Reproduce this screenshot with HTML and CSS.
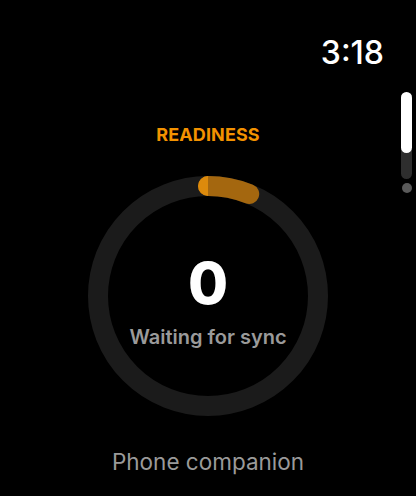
FILE: index.html
```html
<!DOCTYPE html>
<html>
<head>
<meta charset="utf-8">
<link rel="stylesheet" href="styles.css">
</head>
<body>
<div class="screen">
  <div class="status"><span class="time">3:18</span></div>
  <div class="scroll">
    <div class="track"><div class="thumb"></div></div>
    <div class="dot"></div>
  </div>
  <div class="title">READINESS</div>
  <div class="gauge">
    <svg class="ring" width="240" height="240" viewBox="0 0 240 240">
      <circle cx="120" cy="120" r="110" fill="none" stroke="#1b1b1b" stroke-width="20"/>
      <path d="M120 10 A110 110 0 0 1 161.2 18" fill="none" stroke="#a4670f" stroke-width="20" stroke-linecap="round"/>
      <path d="M120 0 A10 10 0 0 0 120 20 Z" fill="#dc8a0c"/>
    </svg>
    <div class="center">
      <div class="value">0</div>
      <div class="label">Waiting for sync</div>
    </div>
  </div>
  <div class="footer">Phone companion</div>
</div>
</body>
</html>
```
FILE: styles.css
```css
html, body {
  margin: 0;
  padding: 0;
  background: #000;
}
.screen {
  width: 416px;
  height: 496px;
  background: #000;
  position: relative;
  display: flex;
  flex-direction: column;
  align-items: center;
  font-family: Inter, "Noto Sans", sans-serif;
  overflow: hidden;
}
.status {
  align-self: stretch;
  display: flex;
  justify-content: flex-end;
  padding: 35px 32px 0 0;
  height: 40px;
}
.time {
  color: #fff;
  font-size: 32px;
  line-height: 36px;
  font-weight: 500;
}
.scroll {
  position: absolute;
  left: 401px;
  top: 92px;
  display: flex;
  flex-direction: column;
  align-items: center;
  gap: 4px;
}
.track {
  width: 11px;
  height: 87px;
  border-radius: 6px;
  background: #2e2e2e;
}
.thumb {
  width: 11px;
  height: 61px;
  border-radius: 6px;
  background: #fff;
}
.dot {
  width: 10px;
  height: 10px;
  border-radius: 50%;
  background: #5a5a5a;
}
.title {
  margin-top: 50px;
  color: #f39200;
  font-size: 18px;
  font-weight: 700;
  line-height: 20px;
  letter-spacing: 0.1px;
}
.gauge {
  margin-top: 31px;
  display: grid;
  width: 240px;
  height: 240px;
}
.ring, .center {
  grid-area: 1 / 1;
}
.center {
  display: flex;
  flex-direction: column;
  align-items: center;
  justify-content: center;
  padding-top: 8px;
  box-sizing: border-box;
}
.value {
  color: #fff;
  font-size: 58px;
  font-weight: 800;
  line-height: 60px;
}
.label {
  margin-top: 13px;
  color: #9a9a9a;
  font-size: 20px;
  font-weight: 600;
  line-height: 22px;
}
.footer {
  margin-top: 33px;
  color: #9a9a9a;
  font-size: 22.5px;
  line-height: 26px;
  font-weight: 400;
}
```
